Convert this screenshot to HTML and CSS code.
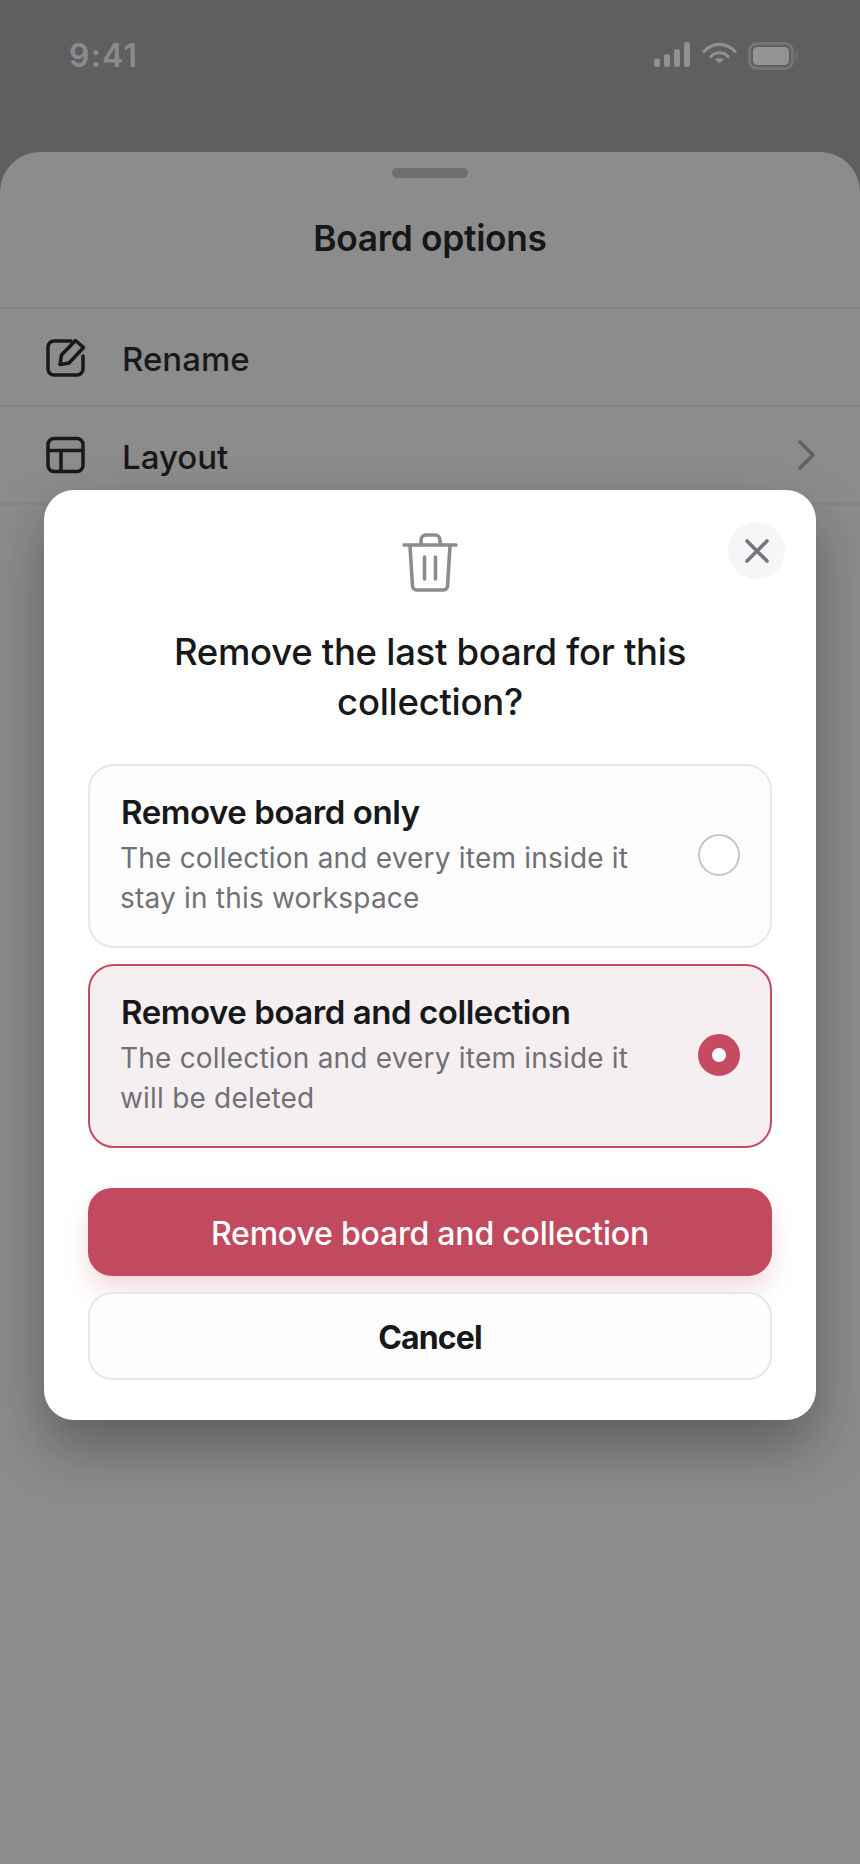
FILE: index.html
```html
<!DOCTYPE html>
<html lang="en">
<head>
<meta charset="utf-8">
<title>Board options</title>
<link rel="stylesheet" href="styles.css">
</head>
<body>
<div class="screen">
  <header class="status">
    <span class="time">9:41</span>
    <div class="status-icons">
      <svg class="signal" width="38" height="25" viewBox="0 0 38 25"><rect x="1" y="16.500" width="6" height="8.500" rx="2.500"/><rect x="11" y="12" width="6" height="13" rx="2.500"/><rect x="21" y="7" width="6" height="18" rx="2.500"/><rect x="31" y="0" width="6" height="25" rx="2.500"/></svg>
      <svg class="wifi" width="35" height="25" viewBox="0 0 35 25"><path d="M2 9.500C10.500 0 24.500 0 33 9.500"/><path d="M9 14.500C13.500 9.500 21.500 9.500 26 14.500"/><path class="wifi-dot" d="M13 17.500C15.500 15.500 19.500 15.500 22 17.500L17.500 21.500Z"/></svg>
      <svg class="battery" width="50" height="28" viewBox="0 0 50 28"><rect class="battery-shell" x="1.500" y="1.500" width="43" height="25" rx="7.500"/><rect class="battery-fill" x="5" y="5" width="36" height="18" rx="4.500"/><rect class="battery-cap" x="47.500" y="10" width="2" height="8" rx="1"/></svg>
    </div>
  </header>

  <section class="sheet">
    <div class="handle"></div>
    <h1 class="sheet-title">Board options</h1>
    <div class="row">
      <svg class="row-icon" width="40" height="40" viewBox="0 0 40 40"><path d="M25 4H8A6 6 0 0 0 2 10V32A6 6 0 0 0 8 38H31A6 6 0 0 0 37 32V19"/><path d="M14 27.500L15.500 18L29.500 3.500L37.500 10.500L23 26Z"/></svg>
      <span class="row-label">Rename</span>
    </div>
    <div class="row">
      <svg class="row-icon" width="40" height="40" viewBox="0 0 40 40"><rect x="2" y="3.500" width="35" height="33" rx="6"/><path d="M2 15.500H37M15 15.500V36.500"/></svg>
      <span class="row-label">Layout</span>
      <svg class="chevron" width="20" height="32" viewBox="0 0 20 32"><path d="M3 3L16 16L3 29"/></svg>
    </div>
  </section>

  <div class="modal">
    <button class="close" aria-label="Close">
      <svg width="26" height="26" viewBox="0 0 26 26"><path d="M3 3L23 23M23 3L3 23"/></svg>
    </button>
    <svg class="trash" width="56" height="60" viewBox="0 0 56 60"><path d="M2 12H54"/><path d="M19 12V7A5 5 0 0 1 24 2H33A5 5 0 0 1 38 7V12"/><path d="M8 13L10.500 53A4 4 0 0 0 14.500 57H41.500A4 4 0 0 0 45.500 53L48 13"/><path d="M22.500 24V46M33.500 24V46"/></svg>
    <h2 class="modal-title">Remove the last board for this collection?</h2>
    <div class="options">
      <div class="option">
        <div class="option-text">
          <div class="option-title">Remove board only</div>
          <div class="option-sub">The collection and every item inside it stay in this workspace</div>
        </div>
        <span class="radio"></span>
      </div>
      <div class="option option-selected">
        <div class="option-text">
          <div class="option-title">Remove board and collection</div>
          <div class="option-sub">The collection and every item inside it will be deleted</div>
        </div>
        <span class="radio radio-on"></span>
      </div>
    </div>
    <button class="btn btn-danger">Remove board and collection</button>
    <button class="btn btn-cancel">Cancel</button>
  </div>
</div>
</body>
</html>
```
FILE: styles.css
```css
* { box-sizing: border-box; }
html, body { margin: 0; padding: 0; }
body { font-family: Inter, "Liberation Sans", sans-serif; background: #5e5f61; }
.screen { position: relative; width: 860px; height: 1864px; overflow: hidden; background: #5e5f61; display: flex; flex-direction: column; }

.status { height: 152px; padding: 42px 62px 0 69px; display: flex; justify-content: space-between; align-items: flex-start; flex: none; }
.time { font-size: 32px; line-height: 28px; font-weight: 600; color: #8a8b8c; letter-spacing: 1.2px; }
.status-icons { display: flex; align-items: flex-start; gap: 11px; }
.signal { fill: #8f9091; }
.wifi path { fill: none; stroke: #8f9091; stroke-width: 3.200; stroke-linecap: round; }
.wifi .wifi-dot { fill: #8f9091; stroke: none; }
.battery-shell { fill: none; stroke: #747576; stroke-width: 3; }
.battery-fill { fill: #929394; }
.battery-cap { fill: #747576; }

.sheet { flex: 1; background: #8c8c8c; border-radius: 40px 40px 0 0; display: flex; flex-direction: column; }
.handle { width: 76px; height: 10px; border-radius: 5px; background: #6e6f70; margin: 16px auto 0; flex: none; }
.sheet-title { margin: 0; height: 131px; padding-top: 38px; text-align: center; font-size: 35.300px; line-height: 46px; font-weight: 600; color: #161718; letter-spacing: -0.3px; border-bottom: 2px solid #848585; flex: none; }
.row { height: 98px; padding: 3px 43px 0 46px; display: flex; align-items: center; border-bottom: 2px solid #848585; flex: none; }
.row-icon { fill: none; stroke: #19191a; stroke-width: 3.500; stroke-linejoin: round; stroke-linecap: round; flex: none; margin: -3px 36px 0 0; }
.row-label { font-size: 33px; font-weight: 500; color: #19191a; flex: 1; }
.chevron { fill: none; stroke: #606163; stroke-width: 3.500; stroke-linecap: round; stroke-linejoin: round; margin-top: -3px; }

.modal { position: absolute; left: 44px; top: 490px; width: 772px; height: 930px; background: #fff; border-radius: 30px; box-shadow: 0 28px 56px rgba(20, 20, 22, 0.36); padding: 43px 44px 0; display: flex; flex-direction: column; align-items: center; }
.close { position: absolute; top: 32px; right: 31px; width: 57px; height: 57px; border: 0; border-radius: 50%; background: #f6f6f8; display: flex; align-items: center; justify-content: center; padding: 0; }
.close svg { fill: none; stroke: #75767b; stroke-width: 3.600; stroke-linecap: round; }
.trash { fill: none; stroke: #8b8c92; stroke-width: 3.600; stroke-linecap: round; stroke-linejoin: round; flex: none; }
.modal-title { margin: 34px 0 0; width: 600px; text-align: center; font-size: 36.500px; line-height: 50px; font-weight: 500; color: #17181a; letter-spacing: -0.28px; }
.options { width: 684px; margin-top: 37px; display: flex; flex-direction: column; gap: 16px; }
.option { height: 184px; border: 2px solid #e7e7e9; border-radius: 26px; padding: 0 30px 0 31px; display: flex; align-items: center; justify-content: space-between; background: #fdfdfe; }
.option-selected { background: #f6eff2; border-color: #c44b60; }
.option-text { width: 540px; margin-top: -4px; }
.option-title { font-size: 33px; line-height: 42px; font-weight: 600; color: #17181a; letter-spacing: -0.450px; }
.option-sub { font-size: 28px; line-height: 40px; font-weight: 400; color: #6f7177; letter-spacing: 0.2px; margin: 5px 0 0 -1px; }
.radio { width: 42px; height: 42px; border-radius: 50%; border: 2px solid #c6c6c8; flex: none; background: #fff; margin-top: -2px; }
.radio-on { border: 14px solid #c54b60; background: #fff; }
.btn { width: 684px; height: 88px; border-radius: 24px; font-family: inherit; font-size: 32px; display: block; flex: none; }
.btn-danger { margin-top: 40px; border: 0; padding: 2px 0 0; background: #c24a5e; color: #fff; font-weight: 500; letter-spacing: -0.2px; box-shadow: 0 14px 24px rgba(194, 74, 94, 0.2); }
.btn-cancel { margin-top: 16px; border: 2px solid #e7e7e9; padding: 2px 0 0; background: #fdfdfe; color: #17181a; font-weight: 700; letter-spacing: -0.9px; }
```
